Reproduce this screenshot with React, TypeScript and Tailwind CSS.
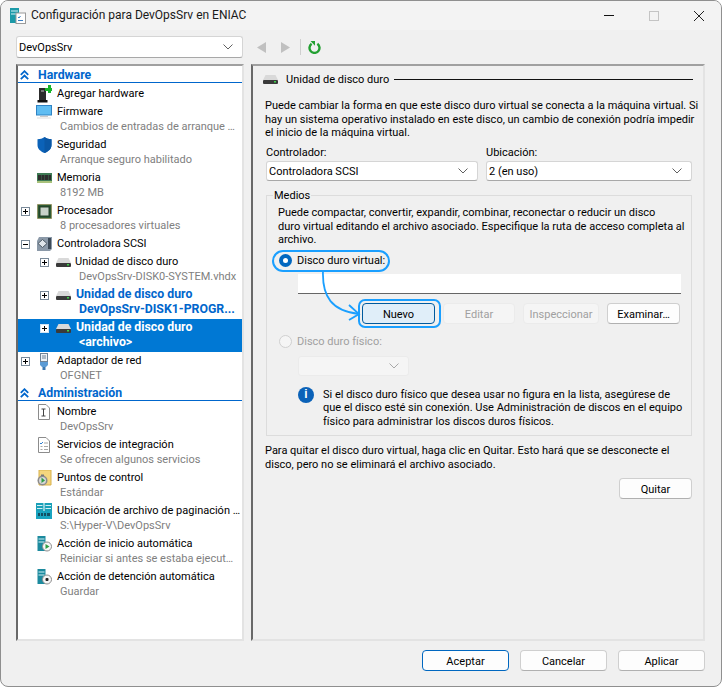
import type { ReactNode } from 'react'

function Chevron({ color = '#606060' }: { color?: string }) {
  return (
    <svg width="10" height="6" viewBox="0 0 10 6" fill="none">
      <path d="M.5.5 5 5 9.5.5" stroke={color} strokeWidth="1" />
    </svg>
  )
}

function DoubleUp() {
  return (
    <svg width="9" height="10" viewBox="0 0 9 10" fill="none" stroke="#0066cc" strokeWidth="1.8">
      <path d="M.8 4.8 4.5 1.2l3.7 3.6M.8 9.2l3.7-3.6 3.7 3.6" />
    </svg>
  )
}

function Expander({ open = false, light = false }: { open?: boolean; light?: boolean }) {
  return (
    <svg width="9" height="9" viewBox="0 0 9 9" className="shrink-0">
      <rect x=".5" y=".5" width="8" height="8" fill="#fff" stroke={light ? '#cfe3f5' : '#7a8a99'} />
      <path d={open ? 'M2 4.5h5' : 'M2 4.5h5M4.5 2v5'} stroke="#000" />
    </svg>
  )
}

function DiskIcon() {
  return (
    <svg width="15" height="9" viewBox="0 0 15 9">
      <path d="M2.500 0h10L15 5H0z" fill="#d9d9d9" />
      <rect x="0" y="5" width="15" height="4" rx="1" fill="#3a3a3a" />
      <rect x="11" y="6" width="2" height="1.500" fill="#3fd24a" />
    </svg>
  )
}

const icons: Record<string, ReactNode> = {
  add: (
    <svg width="16" height="18" viewBox="0 0 16 18">
      <rect x="3" y="3" width="7" height="12" fill="#2c2c2c" />
      <rect x="5" y="5" width="3" height="2" fill="#777" />
      <rect x="1.5" y="15" width="10" height="2.5" fill="#111" />
      <path d="M9 3h3V0h3v3h1v3h-1v2h-3V6H9z" fill="#18b52b" />
    </svg>
  ),
  firmware: (
    <svg width="16" height="14" viewBox="0 0 16 14">
      <rect x=".5" y=".5" width="15" height="9.5" fill="#5fbdf2" stroke="#2f83c4" />
      <rect x="4" y="11" width="8" height="1" fill="#c9c9c9" />
      <rect x="1" y="12.5" width="14" height="1" fill="#dedede" />
    </svg>
  ),
  shield: (
    <svg width="15" height="16" viewBox="0 0 15 16">
      <path d="M7.5 0C5.5 1.6 3 2.2 .5 2.2V8c0 4 3.2 6.5 7 8 3.8-1.500 7-4 7-8V2.200C12 2.200 9.500 1.600 7.500 0z" fill="#0b62b8" />
      <path d="M7.500 0v16c3.800-1.500 7-4 7-8V2.200C12 2.200 9.500 1.600 7.500 0z" fill="#0a57a5" />
    </svg>
  ),
  ram: (
    <svg width="15" height="10" viewBox="0 0 15 10">
      <rect width="15" height="10" fill="#3e7a54" />
      <rect x="1" y="2" width="3" height="5" fill="#2d2d2d" />
      <rect x="4.500" y="2" width="3" height="5" fill="#2d2d2d" />
      <rect x="8" y="2" width="3" height="5" fill="#2d2d2d" />
      <rect x="11.500" y="2" width="2.500" height="5" fill="#2d2d2d" />
      <rect x="0" y="8" width="15" height="2" fill="#a9c27c" />
    </svg>
  ),
  cpu: (
    <svg width="15" height="15" viewBox="0 0 15 15">
      <rect x=".5" y=".5" width="14" height="14" fill="#2e5b34" stroke="#8d7c36" strokeDasharray="1 1" />
      <rect x="2" y="2" width="11" height="11" fill="#24452a" />
      <rect x="3.500" y="3.500" width="8" height="8" fill="#c9d2c9" />
    </svg>
  ),
  scsi: (
    <svg width="16" height="14" viewBox="0 0 16 14">
      <path d="M3 0h13v12l-2 2H1V4z" fill="#8b99a8" />
      <path d="M12 1h3v11h-3z" fill="#3c4a58" />
      <path d="M6.500 2.500 11 6.500 6.500 10.500 2 6.500z" fill="#dfe5ea" stroke="#4d5a66" />
    </svg>
  ),
  nic: (
    <svg width="10" height="17" viewBox="0 0 10 17">
      <rect x="1.500" y=".5" width="7" height="8" fill="#eef3f7" stroke="#6e8296" />
      <rect x="3.500" y="2" width="1" height="4" fill="#6e8296" />
      <rect x="5.500" y="2" width="1" height="4" fill="#6e8296" />
      <path d="M1 9h8v3l-2 2H3l-2-2z" fill="#5b9bd5" />
      <rect x="3.500" y="14" width="3" height="3" fill="#3c78b0" />
    </svg>
  ),
  name: (
    <svg width="12" height="16" viewBox="0 0 12 16" fill="none">
      <path d="M.5.500h7.500l3.500 3.500v11.500H.5z" fill="#fff" stroke="#8c8c8c" />
      <path d="M3.500 5h4M3.500 12h4M5.500 5v7" stroke="#444" />
    </svg>
  ),
  integration: (
    <svg width="12" height="16" viewBox="0 0 12 16" fill="none">
      <path d="M.5.500h7.500l3.500 3.500v11.500H.5z" fill="#fff" stroke="#8c8c8c" />
      <path d="m2 6 1 1 2-2" stroke="#2f7fd1" />
      <path d="M6 6h4M2.500 9.500h2M6 9.500h4M2.500 12.500h2M6 12.500h4" stroke="#a8a8a8" />
    </svg>
  ),
  checkpoint: (
    <svg width="15" height="16" viewBox="0 0 15 16">
      <path d="M2 0h12v15H2z" fill="#f5d67e" stroke="#d8b14c" />
      <circle cx="5.500" cy="10.500" r="5" fill="#8c8c8c" />
      <circle cx="5.500" cy="10.500" r="3.500" fill="#d8d8d8" />
      <path d="M4.500 7.500 8 10.500l-3.500 2.500z" fill="#2f9e44" />
      <rect x="4" y="4.500" width="3" height="1.500" fill="#777" />
    </svg>
  ),
  paging: (
    <svg width="16" height="16" viewBox="0 0 16 16">
      <path d="M0 0h7.500v9H0zM8.500 0H16v9H8.500z" fill="#1aa0b8" />
      <path d="M1 2h5.500v1H1zM1 5h5.500v1H1zM9.500 2H15v1H9.500zM9.500 5H15v1H9.500z" fill="#d5f0f5" />
      <rect y="8" width="16" height="8" fill="#19a4c0" />
      <path d="M2 10h2v3H2zM5 10h2v3H5zM8 10h2v3H8zM11 10h3v3h-3z" fill="#124f63" />
    </svg>
  ),
  start: (
    <svg width="15" height="16" viewBox="0 0 15 16">
      <rect width="8" height="15" x=".5" fill="#1c8a9e" />
      <path d="M1.500 2.500h6v1h-6zM1.500 5.500h6v1h-6z" fill="#cdeef4" />
      <circle cx="10" cy="10.500" r="4.500" fill="#f6f6f6" stroke="#8c8c8c" />
      <path d="M8.500 8 12.500 10.500 8.500 13z" fill="#2f9e44" />
    </svg>
  ),
  stop: (
    <svg width="15" height="16" viewBox="0 0 15 16">
      <rect width="8" height="15" x=".5" fill="#1c8a9e" />
      <path d="M1.500 2.500h6v1h-6zM1.500 5.500h6v1h-6z" fill="#cdeef4" />
      <circle cx="10" cy="10.500" r="4.500" fill="#f6f6f6" stroke="#8c8c8c" />
      <rect x="8.500" y="9" width="3" height="3" rx="1" fill="#222" />
    </svg>
  ),
  disk: <DiskIcon />,
}

type RowProps = {
  icon: string
  label: string
  sub?: string
  expander?: 'plus' | 'minus'
  nested?: boolean
  bold?: boolean
  selected?: boolean
}

function Row({ icon, label, sub, expander, nested, bold, selected }: RowProps) {
  const tone = selected ? 'text-white font-bold text-[12.3px]' : bold ? 'text-[#0066cc] font-bold text-[12.3px]' : 'text-black'
  return (
    <div className={`flex shrink-0 ${sub ? 'h-[33px]' : 'h-[18px]'} ${nested ? 'pl-[22px]' : 'pl-[3px]'} ${selected ? 'bg-[#0078d4]' : ''}`}>
      <div className="w-[9px] mr-[6px] h-[18px] flex items-center">
        {expander && <Expander open={expander === 'minus'} light={selected} />}
      </div>
      <div className="w-4 mr-[5px] h-[18px] flex items-center justify-center">{icons[icon]}</div>
      <div className={`min-w-0 pt-px leading-[15px] whitespace-nowrap ${tone}`}>
        <div className={nested && !bold && !selected ? '-ml-px' : ''}>{label}</div>
        {sub && <div className={`ml-[3px] ${bold || selected ? '' : 'text-[#808080]'}`}>{sub}</div>}
      </div>
    </div>
  )
}

function Section({ title }: { title: string }) {
  return (
    <div className="h-[16px] mb-[2px] shrink-0 border-b border-[#0066cc] flex items-center pl-[2px] pt-px text-[#0066cc] font-bold text-[12.3px]">
      <div className="w-[18px]"><DoubleUp /></div>
      <span>{title}</span>
    </div>
  )
}

function Btn({ children, variant = 'plain', className = '' }: { children: ReactNode; variant?: 'plain' | 'disabled' | 'primary' | 'active'; className?: string }) {
  const tone = {
    disabled: 'bg-[#f5f5f5] border-[#ebebeb] text-[#a0a0a0]',
    primary: 'bg-[#fdfdfd] border-[#0067c0] text-black',
    active: 'bg-[#e0eef9] border-[#005a9e] text-black',
    plain: 'bg-[#fdfdfd] border-[#cfcfcf] border-b-[#b0b0b0] text-black',
  }[variant]
  return <div className={`h-[21px] pt-px flex items-center justify-center rounded-[4px] border ${tone} ${className}`}>{children}</div>
}

function Combo({ children, className = '', disabled }: { children?: ReactNode; className?: string; disabled?: boolean }) {
  return (
    <div className={`flex items-center justify-between rounded-[3px] border pl-[2px] pr-[9px] ${disabled ? 'bg-[#f5f5f5] border-[#ebebeb]' : 'bg-white border-[#d5d5d5] border-b-[#a8a8a8]'} ${className}`}>
      <span>{children}</span>
      <Chevron color={disabled ? '#a8a8a8' : '#606060'} />
    </div>
  )
}

export default function App() {
  return (
    <div className="w-[722px] h-[687px] bg-white font-['Roboto',sans-serif] text-[11px] leading-[15px] text-black overflow-hidden">
      <div className="relative w-full h-full border border-[#8f8f8f] rounded-[8px] bg-[#f0f0f0] overflow-hidden flex flex-col">
        {/* Title bar */}
        <div className="h-[29px] shrink-0 bg-[#f3f3f3] flex items-center pl-[9px]">
          <svg width="16" height="16" viewBox="0 0 16 16">
            <rect x="0" y="0" width="9" height="15" fill="#1c9aa8" />
            <path d="M1 2.500h7v1H1zM1 5.500h7v1H1z" fill="#d5f0f5" />
            <rect x="6" y="5" width="9.500" height="10.500" fill="#fff" stroke="#9a9a9a" />
            <path d="m8 9 1 1 1.500-2M8 12.500h5" stroke="#3a7fc4" fill="none" />
          </svg>
          <span className="ml-[5px] text-[12px] text-[#1a1a1a]">Configuración para DevOpsSrv en ENIAC</span>
          <div className="ml-auto mr-[17px] flex items-center gap-[35px]">
            <div className="w-[10px] h-px bg-[#111]" />
            <div className="w-[10px] h-[10px] border border-[#c4c4c4]" />
            <svg width="10" height="10" viewBox="0 0 10 10" stroke="#222" strokeWidth="1"><path d="m0 0 10 10M10 0 0 10" /></svg>
          </div>
        </div>

        {/* Machine picker + toolbar */}
        <div className="h-[34px] shrink-0 flex items-center pl-[15px]">
          <Combo className="w-[227px] h-[22px]">DevOpsSrv</Combo>
          <div className="ml-[14px] flex items-center">
            <svg width="10" height="11" viewBox="0 0 10 11"><path d="M9 0v11L0 5.500z" fill="#c0c0c0" /></svg>
            <svg className="ml-[13px]" width="10" height="11" viewBox="0 0 10 11"><path d="M1 0v11l9-5.500z" fill="#c0c0c0" /></svg>
            <div className="ml-[10px] w-px h-[16px] bg-[#cfcfcf]" />
            <svg className="ml-[7px]" width="13" height="13" viewBox="0 0 13 13" fill="none">
              <path d="M3.600 2.800a5 5 0 1 0 5.800 0" stroke="#23a032" strokeWidth="2.400" />
              <path d="M2.500 0 7 0 7 4.800z" fill="#23a032" />
            </svg>
          </div>
        </div>

        <div className="flex flex-1 min-h-0 pl-[15px] pr-[16px] gap-[7px]">
          {/* Left tree */}
          <div className="w-[229px] h-[577px] bg-white border-2 border-[#a0a0a0] border-l-[#696969] border-r-[#e3e3e3] border-b-[#e3e3e3] flex flex-col pt-px">
            <Section title="Hardware" />
            <Row icon="add" label="Agregar hardware" />
            <Row icon="firmware" label="Firmware" sub="Cambios de entradas de arranque …" />
            <Row icon="shield" label="Seguridad" sub="Arranque seguro habilitado" />
            <Row icon="ram" label="Memoria" sub="8192 MB" />
            <Row icon="cpu" label="Procesador" sub="8 procesadores virtuales" expander="plus" />
            <Row icon="scsi" label="Controladora SCSI" expander="minus" />
            <Row icon="disk" label="Unidad de disco duro" sub="DevOpsSrv-DISK0-SYSTEM.vhdx" expander="plus" nested />
            <Row icon="disk" label="Unidad de disco duro" sub="DevOpsSrv-DISK1-PROGR..." expander="plus" nested bold />
            <Row icon="disk" label="Unidad de disco duro" sub="<archivo>" expander="plus" nested selected />
            <Row icon="nic" label="Adaptador de red" sub="OFGNET" expander="plus" />
            <Section title="Administración" />
            <Row icon="name" label="Nombre" sub="DevOpsSrv" />
            <Row icon="integration" label="Servicios de integración" sub="Se ofrecen algunos servicios" />
            <Row icon="checkpoint" label="Puntos de control" sub="Estándar" />
            <Row icon="paging" label="Ubicación de archivo de paginación …" sub="S:\Hyper-V\DevOpsSrv" />
            <Row icon="start" label="Acción de inicio automática" sub="Reiniciar si antes se estaba ejecut…" />
            <Row icon="stop" label="Acción de detención automática" sub="Guardar" />
          </div>

          {/* Right pane */}
          <div className="relative w-[454px] h-[577px] border-2 border-[#a0a0a0] border-l-[#696969] border-r-[#e3e3e3] border-b-[#e3e3e3] pl-[12px] pr-[10px] pt-[6px] flex flex-col">
            <div className="flex items-center h-[15px] -ml-[2px]">
              <DiskIcon />
              <span className="ml-[8px] whitespace-nowrap">Unidad de disco duro</span>
              <div className="ml-[5px] flex-1 h-px bg-[#111]" />
            </div>
            <div className="mt-[12px] leading-[13.500px] whitespace-nowrap">
              <div>Puede cambiar la forma en que este disco duro virtual se conecta a la máquina virtual. Si</div>
              <div>hay un sistema operativo instalado en este disco, un cambio de conexión podría impedir</div>
              <div>el inicio de la máquina virtual.</div>
            </div>

            <div className="mt-[5px] flex gap-[8px] pl-px pr-px">
              <div className="w-[212px]">
                <div>Controlador:</div>
                <Combo className="h-[20px] mt-[1.500px]">Controladora SCSI</Combo>
              </div>
              <div className="w-[206px]">
                <div>Ubicación:</div>
                <Combo className="h-[20px] mt-[1.500px]">2 (en uso)</Combo>
              </div>
            </div>

            {/* Medios group */}
            <div className="relative mt-[14px] ml-px w-[426px] h-[241px] border border-[#dcdcdc] pl-[11px] pr-[10px] pt-[10px]">
              <div className="absolute left-[6px] top-[-8px] bg-[#f0f0f0] px-px leading-[15px]">Medios</div>
              <div className="leading-[13.500px] whitespace-nowrap">
                <div>Puede compactar, convertir, expandir, combinar, reconectar o reducir un disco</div>
                <div>duro virtual editando el archivo asociado. Especifique la ruta de acceso completa al</div>
                <div>archivo.</div>
              </div>

              <div className="mt-[3.500px] flex items-center h-[21px]">
                <div className="w-[13px] h-[13px] rounded-full bg-[#0067c0] flex items-center justify-center ml-[1px]">
                  <div className="w-[5px] h-[5px] rounded-full bg-white" />
                </div>
                <span className="ml-[5px]">Disco duro virtual:</span>
              </div>
              <div className="mt-[3px] ml-[20px] w-[383px] h-[20px] bg-white border-b border-[#666]" />
              <div className="mt-[9px] ml-[84px] flex gap-[8px]">
                <Btn variant="active" className="w-[73px]">Nuevo</Btn>
                <Btn variant="disabled" className="w-[72px]">Editar</Btn>
                <Btn variant="disabled" className="w-[76px]">Inspeccionar</Btn>
                <Btn className="w-[73px]">Examinar…</Btn>
              </div>

              <div className="mt-[9.500px] flex items-center h-[15px] text-[#a0a0a0]">
                <div className="ml-[1px] w-[13px] h-[13px] rounded-full border border-[#d0d0d0] bg-[#f5f5f5]" />
                <span className="ml-[5px]">Disco duro físico:</span>
              </div>
              <Combo disabled className="mt-[7px] ml-[20px] w-[111px] h-[20px]" />

              <div className="mt-[12px] flex ml-[20px]">
                <div className="-mt-px w-[16px] h-[16px] rounded-full bg-[#0b62b8] text-white font-bold flex items-center justify-center text-[12px] shrink-0 font-['Liberation_Sans',sans-serif]">i</div>
                <div className="ml-[9px] leading-[13.500px] whitespace-nowrap">
                  <div>Si el disco duro físico que desea usar no figura en la lista, asegúrese de</div>
                  <div>que el disco esté sin conexión. Use Administración de discos en el equipo</div>
                  <div>físico para administrar los discos duros físicos.</div>
                </div>
              </div>

              {/* Callout rings and arrow */}
              <div className="absolute left-[5px] top-[54px] w-[118px] h-[22px] rounded-full border-2 border-[#1a9fff]" />
              <div className="absolute left-[91px] top-[103px] w-[83px] h-[29px] rounded-[7px] border-2 border-[#1a9fff]" />
              <svg className="absolute left-[50px] top-[75px]" width="45" height="50" viewBox="0 0 45 50" fill="none" stroke="#1a9fff" strokeWidth="1.800">
                <path d="M6 0c-1 26 9 40 36 43" />
                <path d="M32 34l10 9-10 6" />
              </svg>
            </div>

            <div className="mt-[8px] leading-[13.500px] whitespace-nowrap">
              <div>Para quitar el disco duro virtual, haga clic en Quitar. Esto hará que se desconecte el</div>
              <div>disco, pero no se eliminará el archivo asociado.</div>
            </div>
            <div className="mt-[7px] flex justify-end pr-[1px]">
              <Btn className="w-[73px]">Quitar</Btn>
            </div>
          </div>
        </div>

        {/* Dialog buttons */}
        <div className="h-[46px] shrink-0 flex items-start justify-end pt-[10px] pr-[16px] gap-[11px]">
          <Btn variant="primary" className="w-[87px]">Aceptar</Btn>
          <Btn className="w-[87px]">Cancelar</Btn>
          <Btn className="w-[87px]">Aplicar</Btn>
        </div>
      </div>
    </div>
  )
}
